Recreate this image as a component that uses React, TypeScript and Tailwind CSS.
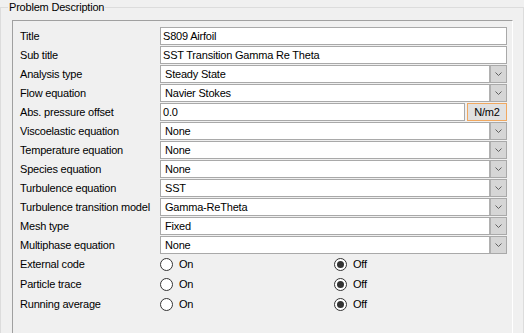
import React from "react";

type Row =
  | { label: string; kind: "text"; value: string }
  | { label: string; kind: "combo"; value: string }
  | { label: string; kind: "unit"; value: string; unit: string }
  | { label: string; kind: "radio" };

const rows: Row[] = [
  { label: "Title", kind: "text", value: "S809 Airfoil" },
  { label: "Sub title", kind: "text", value: "SST Transition Gamma Re Theta" },
  { label: "Analysis type", kind: "combo", value: "Steady State" },
  { label: "Flow equation", kind: "combo", value: "Navier Stokes" },
  { label: "Abs. pressure offset", kind: "unit", value: "0.0", unit: "N/m2" },
  { label: "Viscoelastic equation", kind: "combo", value: "None" },
  { label: "Temperature equation", kind: "combo", value: "None" },
  { label: "Species equation", kind: "combo", value: "None" },
  { label: "Turbulence equation", kind: "combo", value: "SST" },
  { label: "Turbulence transition model", kind: "combo", value: "Gamma-ReTheta" },
  { label: "Mesh type", kind: "combo", value: "Fixed" },
  { label: "Multiphase equation", kind: "combo", value: "None" },
];

const radios = ["External code", "Particle trace", "Running average"];

function Chevron() {
  return (
    <svg width="9" height="6" viewBox="0 0 9 6">
      <path d="M1.5 1.5 L4.5 4.5 L7.5 1.5" fill="none" stroke="#606060" strokeWidth="1" />
    </svg>
  );
}

function Radio({ checked, label }: { checked: boolean; label: string }) {
  return (
    <div className="flex items-center">
      <div className="w-[13px] h-[13px] rounded-full border border-[#333333] bg-white flex items-center justify-center">
        {checked && <div className="w-[7px] h-[7px] rounded-full bg-[#333333]" />}
      </div>
      <span className="ml-[6px]">{label}</span>
    </div>
  );
}

export default function App() {
  return (
    <div
      className="w-[524px] h-[333px] overflow-hidden bg-[#f0f0f0] text-[11px] tracking-[-0.2px] text-black leading-none"
      style={{ fontFamily: '"Liberation Sans", Arial, sans-serif' }}
    >
      <fieldset className="border border-[#dcdcdc] h-[360px] mr-0 flex flex-col">
        <legend className="ml-[7px] px-[1px] leading-[14px]">Problem Description</legend>
        <div className="mt-[6px] ml-[11px] mr-[10px] flex-1 border-t border-l border-[#a0a0a0] border-r border-b border-r-white border-b-white pt-[6px] pl-[7px] pr-[5px]">
          <div className="flex flex-col gap-[1px]">
            {rows.map((r) => (
              <div key={r.label} className="flex items-center h-[18px]">
                <div className="w-[140px] shrink-0">{r.label}</div>
                {r.kind === "text" && (
                  <div className="flex-1 h-[18px] bg-white border border-[#a9a9a9] flex items-center pl-[2px]">
                    {r.value}
                  </div>
                )}
                {r.kind === "combo" && (
                  <div className="flex-1 h-[18px] bg-white border border-[#a9a9a9] flex items-center">
                    <span className="flex-1 pl-[4px]">{r.value}</span>
                    <div className="w-[17px] h-full bg-[#d6d6d6] border-l-2 border-[#b0b0b0] flex items-center justify-center">
                      <Chevron />
                    </div>
                  </div>
                )}
                {r.kind === "unit" && (
                  <div className="flex-1 flex items-center gap-[2px] h-[18px]">
                    <div className="flex-1 h-[18px] bg-white border border-[#a9a9a9] flex items-center pl-[2px]">
                      {r.value}
                    </div>
                    <div className="w-[40px] h-[18px] bg-[#e1e1e1] border border-[#f0a860] flex items-center justify-center">
                      {r.unit}
                    </div>
                  </div>
                )}
              </div>
            ))}
          </div>
          <div className="flex flex-col">
            {radios.map((l) => (
              <div key={l} className="flex items-center h-[20px]">
                <div className="w-[140px] shrink-0">{l}</div>
                <div className="w-[174px]">
                  <Radio checked={false} label="On" />
                </div>
                <Radio checked={true} label="Off" />
              </div>
            ))}
          </div>
        </div>
      </fieldset>
    </div>
  );
}
